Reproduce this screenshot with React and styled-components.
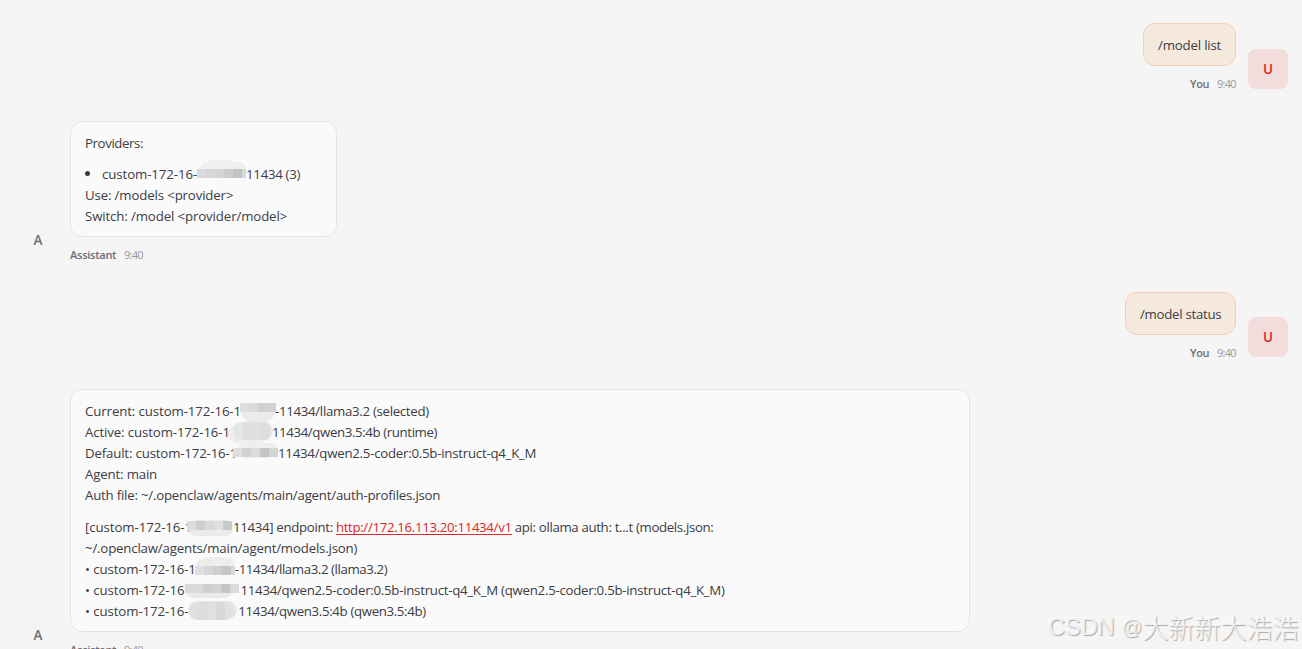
import React from 'react';
import styled, { createGlobalStyle } from 'styled-components';

const GlobalStyle = createGlobalStyle`
  * { box-sizing: border-box; }
  body {
    margin: 0;
    background: #f5f5f5;
    overflow: hidden;
    font-family: "Open Sans", "Noto Sans", sans-serif;
  }
`;

const Page = styled.main`
  position: relative;
  height: 649px;
  overflow: hidden;
  background: #f5f5f5;
`;

const Thread = styled.div`
  display: flex;
  flex-direction: column;
  gap: 28.7px;
  padding: 23.3px 14px 0 18px;
`;

const Group = styled.section`
  display: flex;
  flex-direction: ${(p) => (p.$user ? 'row-reverse' : 'row')};
  align-items: flex-end;
  gap: 12px;
`;

const Avatar = styled.div`
  flex: none;
  width: 40px;
  height: 40px;
  margin-bottom: 3.4px;
  border-radius: 8px;
  display: flex;
  align-items: center;
  justify-content: center;
  font-size: 13.5px;
  font-weight: 600;
  color: ${(p) => (p.$user ? '#dc2626' : '#6e6e73')};
  background: ${(p) => (p.$user ? '#f2dcdc' : '#f4f4f4')};
`;

const Column = styled.div`
  display: flex;
  flex-direction: column;
  align-items: ${(p) => (p.$user ? 'flex-end' : 'flex-start')};
`;

const Bubble = styled.div`
  display: flex;
  flex-direction: column;
  gap: ${(p) => p.$gap || 0}px;
  width: ${(p) => p.$width}px;
  padding: 11px 14px 9px;
  border: 1px solid ${(p) => (p.$user ? '#f5cdb4' : '#e4e4e6')};
  border-radius: 12px;
  background: ${(p) => (p.$user ? '#f5e9dd' : '#fafafa')};
  color: #3c3c43;
  font-size: 13.25px;
  line-height: 21px;
`;

const Paragraph = styled.div`
  display: flex;
  flex-direction: column;
`;

const Line = styled.div`
  display: flex;
  height: 21px;
  white-space: pre;
`;

const Bullet = styled.span`
  width: 5px;
  height: 5px;
  margin: 7px 12px 0 0;
  border-radius: 50%;
  background: #3c3c43;
`;

const Text = styled.span`
  letter-spacing: ${(p) => ((p.$track || 0) - 0.125).toFixed(3)}px;
`;

const Link = styled.a`
  height: 18px;
  color: #dc2626;
  letter-spacing: -0.335px;
  margin-left: 3px;
  border-bottom: 1px solid #dc2626;
`;

const Meta = styled.div`
  display: flex;
  gap: 8px;
  height: 16px;
  margin-top: 10px;
  line-height: 16px;
  font-size: 11px;
  white-space: nowrap;
`;

const Sender = styled.span`
  font-weight: 600;
  color: #6e6e73;
  width: ${(p) => p.$width}px;
  letter-spacing: ${(p) => p.$track}px;
`;

const Time = styled.span`
  width: 19px;
  color: #98989c;
  letter-spacing: -0.7px;
`;

const MosaicSvg = styled.svg`
  flex: none;
  display: block;
  overflow: visible;
  margin-top: -1px;
`;

const Watermark = styled.div`
  position: absolute;
  left: 1048px;
  top: 608px;
  display: flex;
  gap: 7px;
  line-height: 38px;
  white-space: nowrap;
  color: #f0f0f0;
  text-shadow: 1px 1px 1px #a6a6a6, -1px -1px 0 #fbfbfb;
  font-family: "Liberation Sans", "Noto Sans CJK SC", sans-serif;
  font-size: 23.5px;
`;

const Handle = styled.span`
  display: flex;
  font-size: 20.5px;
`;

const Name = styled.span`
  font-family: "Noto Sans CJK SC", sans-serif;
  font-weight: 300;
  font-size: 26px;
`;

/* Pixelated strip hiding part of an address: soft pads, then 9px cells. */
function Mosaic({ id, width, pads = [], x, y, w, h = 9, r = 0, cells }) {
  return (
    <MosaicSvg width={width} height="21">
      {pads.map(([px, py, pw, ph, fill], i) => (
        <rect key={i} x={px} y={py} width={pw} height={ph} rx={Math.min(ph / 2, 10)} fill={fill} />
      ))}
      <clipPath id={id}>
        <rect x={x} y={y} width={w || cells.length * 9} height={h} rx={r} />
      </clipPath>
      <g clipPath={`url(#${id})`}>
        {cells.map((fill, i) => (
          <rect key={i} x={x + i * 9} y={y} width="9.1" height={h} fill={fill} />
        ))}
      </g>
    </MosaicSvg>
  );
}

function Message({ user, width, gap, children }) {
  return (
    <Group $user={user}>
      <Avatar $user={user}>{user ? 'U' : 'A'}</Avatar>
      <Column $user={user}>
        <Bubble $user={user} $width={width} $gap={gap}>{children}</Bubble>
        <Meta>
          <Sender $width={user ? 19 : 46} $track={user ? -0.3 : -0.25}>{user ? 'You' : 'Assistant'}</Sender>
          <Time>9:40</Time>
        </Meta>
      </Column>
    </Group>
  );
}

export default function App() {
  return (
    <Page>
      <GlobalStyle />
      <Thread>
        <Message user width={93}>
          <Line><Text $track={-0.06}>/model list</Text></Line>
        </Message>

        <Message width={267} gap={10}>
          <Paragraph>
            <Line><Text $track={-0.27}>Providers:</Text></Line>
          </Paragraph>
          <Paragraph>
            <Line>
              <Bullet />
              <Text $track={0.03}>custom-172-16-</Text>
              <Mosaic id="m1" width={49} pads={[[3, -1, 46, 15, '#efeff0'], [9, -3, 28, 12, '#f0f0f1']]} x={0} y={6} w={49}
                cells={['#dadadc', '#d6d6d8', '#d4d4d6', '#cdcdcf', '#c3c3c5', '#d8d8da']} />
              <Text $track={-0.18}>11434 (3)</Text>
            </Line>
            <Line><Text $track={-0.02}>{'Use: /models <provider>'}</Text></Line>
            <Line><Text>{'Switch: /model <provider/model>'}</Text></Line>
          </Paragraph>
        </Message>

        <Message user width={111}>
          <Line><Text $track={-0.16}>/model status</Text></Line>
        </Message>

        <Message width={900} gap={11}>
          <Paragraph>
            <Line>
              <Text $track={0.02}>Current: custom-172-16-1</Text>
              <Mosaic id="m2" width={34} pads={[[0, 3, 34, 18, '#ebebec']]} x={-1} y={3}
                cells={['#dfdfe0', '#dad8d9', '#cfcfd1', '#d5d1d2']} />
              <Text $track={-0.18}>-11434/llama3.2 (selected)</Text>
            </Line>
            <Line>
              <Text>Active: custom-172-16-1</Text>
              <Mosaic id="m3" width={42} pads={[[6, 0, 37, 20, '#e9e9ea'], [-2, 4, 40, 18, '#eeeeef']]} x={4} y={1} w={36} h={18} r={6}
                cells={['#e6e6e7', '#e0e0e2', '#dfdfe1', '#dddcdb']} />
              <Text $track={-0.26}>11434/qwen3.5:4b (runtime)</Text>
            </Line>
            <Line>
              <Text $track={-0.04}>Default: custom-172-16-1</Text>
              <Mosaic id="m4" width={41} pads={[[0, 1, 41, 15, '#eeeeef']]} x={-4} y={6}
                cells={['#dededf', '#d2d0d1', '#dbdbdd', '#c5c5c8', '#d4d4d6']} />
              <Text $track={-0.12}>11434/qwen2.5-coder:0.5b-instruct-q4_K_M</Text>
            </Line>
            <Line><Text $track={-0.04}>Agent: main</Text></Line>
            <Line><Text $track={-0.09}>Auth file: ~/.openclaw/agents/main/agent/auth-profiles.json</Text></Line>
          </Paragraph>
          <Paragraph>
            <Line>
              <Text $track={0.04}>[custom-172-16-1</Text>
              <Mosaic id="m5" width={41} pads={[[-4, 4, 45, 16, '#ebebec']]} x={-5} y={5} r={1}
                cells={['#dddbdc', '#cfcccd', '#d9d9da', '#dee0e4', '#c7c8cc']} />
              <Text $track={-0.2}>11434] endpoint:</Text>
              <Link>http://172.16.113.20:11434/v1</Link>
              <Text $track={-0.22}> api: ollama auth: t...t (models.json:</Text>
            </Line>
            <Line><Text $track={-0.06}>~/.openclaw/agents/main/agent/models.json)</Text></Line>
            <Line>
              <Text $track={0.03}>• custom-172-16-1</Text>
              <Mosaic id="m6" width={39} pads={[[0, 1, 38, 15, '#ebebec'], [4, -1, 34, 14, '#ededee']]} x={-1} y={8} w={40}
                cells={['#dfdfe1', '#d6d6d8', '#cfcfd1', '#c5c5c8', '#d8d8da']} />
              <Text $track={-0.28}>-11434/llama3.2 (llama3.2)</Text>
            </Line>
            <Line>
              <Text $track={0.05}>• custom-172-16</Text>
              <Mosaic id="m7" width={56} pads={[[2, 5, 46, 14, '#e9e9ea']]} x={1} y={5}
                cells={['#dadadc', '#d9d9db', '#cfcfd2', '#d3d3d5', '#c5c5c8', '#dadadc']} />
              <Text $track={-0.14}>11434/qwen2.5-coder:0.5b-instruct-q4_K_M (qwen2.5-coder:0.5b-instruct-q4_K_M)</Text>
            </Line>
            <Line>
              <Text $track={0.03}>• custom-172-16-</Text>
              <Mosaic id="m8" width={50} pads={[[0, 1, 49, 18, '#e7e7e8']]} x={1} y={2} h={18} r={8}
                cells={['#e0e0e1', '#dddddf', '#e2dfdf', '#d8d8da', '#e2e1df']} />
              <Text $track={-0.22}>11434/qwen3.5:4b (qwen3.5:4b)</Text>
            </Line>
          </Paragraph>
        </Message>
      </Thread>
      <Watermark>
        <span>CSDN</span>
        <Handle>@<Name>大新新大浩浩</Name></Handle>
      </Watermark>
    </Page>
  );
}
